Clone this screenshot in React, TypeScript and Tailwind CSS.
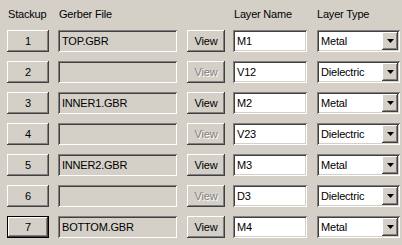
import { ReactNode } from 'react'

type Row = {
  n: number
  file: string
  layer: string
  type: string
  hasFile: boolean
}

const ROWS: Row[] = [
  { n: 1, file: 'TOP.GBR', layer: 'M1', type: 'Metal', hasFile: true },
  { n: 2, file: '', layer: 'V12', type: 'Dielectric', hasFile: false },
  { n: 3, file: 'INNER1.GBR', layer: 'M2', type: 'Metal', hasFile: true },
  { n: 4, file: '', layer: 'V23', type: 'Dielectric', hasFile: false },
  { n: 5, file: 'INNER2.GBR', layer: 'M3', type: 'Metal', hasFile: true },
  { n: 6, file: '', layer: 'D3', type: 'Dielectric', hasFile: false },
  { n: 7, file: 'BOTTOM.GBR', layer: 'M4', type: 'Metal', hasFile: true },
]

const raised =
  'shadow-[inset_-1px_-1px_#404040,inset_1px_1px_#ffffff,inset_-2px_-2px_#808080,inset_2px_2px_#d4d0c8]'
const sunken =
  'shadow-[inset_1px_1px_#808080,inset_-1px_-1px_#ffffff,inset_2px_2px_#404040,inset_-2px_-2px_#d4d0c8]'

function Button({ children, disabled, isDefault, className }: { children: ReactNode; disabled?: boolean; isDefault?: boolean; className: string }) {
  return (
    <div
      className={`flex h-[22px] shrink-0 items-center justify-center bg-[#d4d0c8] ${className} ${
        isDefault ? 'border border-black' : ''
      }`}
    >
      <div
        className={`flex h-full w-full items-center justify-center ${
          isDefault
            ? 'shadow-[inset_-1px_-1px_#404040,inset_1px_1px_#ffffff,inset_-2px_-2px_#808080]'
            : raised
        } ${disabled ? 'text-[#808080] [text-shadow:1px_1px_#ffffff]' : 'text-black'}`}
      >
        {children}
      </div>
    </div>
  )
}

function Field({ value, white, className }: { value: string; white?: boolean; className: string }) {
  return (
    <div
      className={`flex h-[22px] shrink-0 items-center pl-[4px] ${sunken} ${
        white ? 'bg-white' : 'bg-[#d4d0c8]'
      } ${className}`}
    >
      {value}
    </div>
  )
}

function Combo({ value }: { value: string }) {
  return (
    <div className={`flex h-[22px] w-[83px] shrink-0 items-center bg-white p-[2px] ${sunken}`}>
      <span className="flex-1 pl-[2px]">{value}</span>
      <div className={`flex h-[18px] w-[16px] items-center justify-center bg-[#d4d0c8] ${raised}`}>
        <svg width="7" height="4" viewBox="0 0 7 4" className="ml-[1px]">
          <path d="M0 0h7L3.5 4z" fill="#000" />
        </svg>
      </div>
    </div>
  )
}

export default function App() {
  return (
    <div className="h-[245px] w-[402px] bg-[#d4d0c8] font-['Liberation_Sans',Arial,sans-serif] text-[11px] tracking-[-0.2px] text-black">
      <div className="flex h-[30px] items-start pt-[6px]">
        <span className="ml-[8px] w-[51px]">Stackup</span>
        <span className="w-[175px]">Gerber File</span>
        <span className="w-[83px]">Layer Name</span>
        <span>Layer Type</span>
      </div>
      <div className="flex flex-col gap-[9px]">
        {ROWS.map((r) => (
          <div key={r.n} className="flex items-center">
            <Button className="ml-[7px] w-[42px]" isDefault={r.n === 7}>
              {r.n}
            </Button>
            <Field value={r.file} className="ml-[9px] w-[119px]" />
            <Button className="ml-[10px] w-[38px]" disabled={!r.hasFile}>
              View
            </Button>
            <Field value={r.layer} white className="ml-[8px] w-[74px]" />
            <div className="ml-[10px]">
              <Combo value={r.type} />
            </div>
          </div>
        ))}
      </div>
    </div>
  )
}
